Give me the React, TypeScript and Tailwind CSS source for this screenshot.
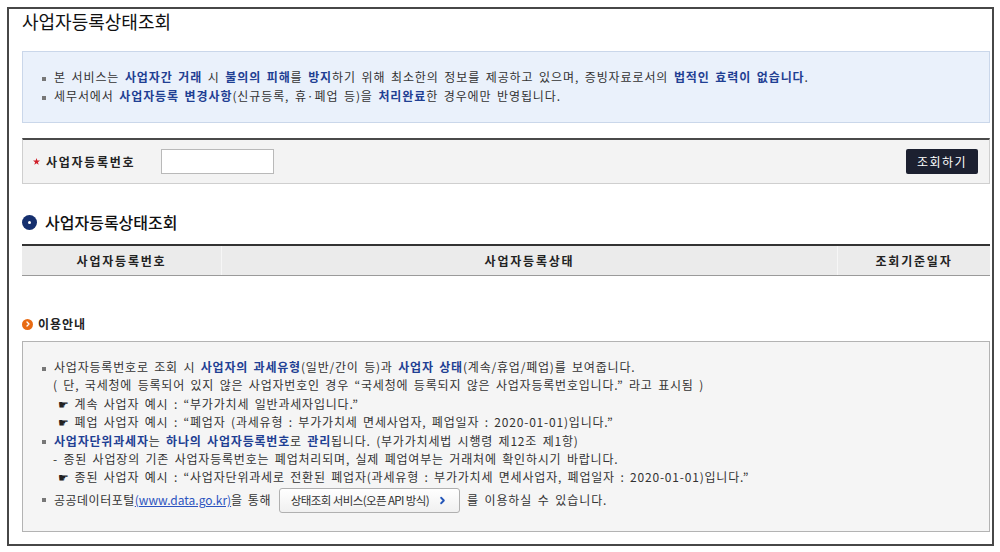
import { ChevronRight } from 'lucide-react';

const font = { fontFamily: '"Noto Sans CJK KR", "Noto Sans", sans-serif' };

function B({ children }: { children: React.ReactNode }) {
  return <b className="font-bold text-[#1f3f93]">{children}</b>;
}

function Dot() {
  return <span className="mr-[8px] inline-block h-[4px] w-[4px] bg-[#777] align-middle" />;
}

function Hand() {
  return (
    <span className="mr-[5px] inline-block text-[12px] leading-none text-[#222]" style={{ fontFamily: '"DejaVu Sans", sans-serif' }}>
      ☛
    </span>
  );
}

export default function App() {
  return (
    <div className="h-[552px] w-[1000px] bg-white pl-[7px] pt-[7px] text-[#333]" style={font}>
      <div className="h-[539px] w-[987px] border-2 border-[#474747] pl-[13px] pr-[2px]">
        <h1 className="h-[24px] text-[18px] leading-[24px] font-normal text-[#111]">사업자등록상태조회</h1>

        {/* info */}
        <div className="mt-[18px] border border-[#cad7ea] bg-[#eaf1fb] pb-[17px] pl-[19px] pt-[15px] text-[12px] leading-[19px] tracking-[0.9px] [word-spacing:2px]">
          <p>
            <Dot />본 서비스는 <B>사업자간 거래</B> 시 <B>불의의 피해</B>를 <B>방지</B>하기 위해 최소한의 정보를 제공하고 있으며, 증빙자료로서의 <B>법적인 효력이 없습니다</B>.
          </p>
          <p>
            <Dot />세무서에서 <B>사업자등록 변경사항</B>(신규등록, 휴·폐업 등)을 <B>처리완료</B>한 경우에만 반영됩니다.
          </p>
        </div>

        {/* search */}
        <div className="mt-[15px] flex h-[46px] items-center justify-between border border-t-2 border-[#cfcfcf] border-t-[#4a4a4a] bg-[#f3f3f3] pl-[10px] pr-[11px]">
          <div className="flex items-center">
            <svg className="mr-[6px]" width="7" height="7" viewBox="0 0 10 10">
              <path d="M5 0 L6.2 3.4 L10 3.6 L7 5.9 L8.1 9.6 L5 7.5 L1.9 9.6 L3 5.9 L0 3.6 L3.8 3.4 Z" fill="#d0202a" />
            </svg>
            <span className="w-[115px] text-[12px] font-bold tracking-[1.7px] text-[#222]">사업자등록번호</span>
            <input className="h-[25px] w-[113px] border border-[#b9b9b9] bg-white" />
          </div>
          <button className="h-[25px] w-[72px] rounded-[2px] bg-[#1c2030] text-[12px] tracking-[1.5px] text-white">조회하기</button>
        </div>

        {/* section heading */}
        <div className="mt-[28px] flex h-[20px] items-center">
          <span className="mr-[8px] flex h-[15px] w-[15px] items-center justify-center rounded-full bg-[#152f6e]">
            <span className="h-[3px] w-[3px] rounded-full bg-white" />
          </span>
          <span className="text-[16px] font-medium text-[#111]">사업자등록상태조회</span>
        </div>

        <div className="mt-[12px] grid h-[32px] grid-cols-[200px_1fr_152px] border-t-2 border-b border-t-[#333] border-b-[#9a9a9a] bg-[#ebebeb] text-[12px] font-bold tracking-[1.8px] text-[#222]">
          <div className="flex items-center justify-center border-r border-[#f6f6f6]">사업자등록번호</div>
          <div className="flex items-center justify-center border-r border-[#f6f6f6]">사업자등록상태</div>
          <div className="flex items-center justify-center">조회기준일자</div>
        </div>

        {/* guide */}
        <div className="mt-[40px] flex h-[16px] items-center">
          <span className="mr-[5px] flex h-[11px] w-[11px] items-center justify-center rounded-full bg-[#e86a12]">
            <ChevronRight className="h-[8px] w-[8px] text-white" strokeWidth={4} />
          </span>
          <span className="text-[12px] font-bold tracking-[1px] text-[#222]">이용안내</span>
        </div>

        <div className="mt-[9px] border border-[#b3b3b3] bg-[#f5f5f5] pb-[18px] pl-[19px] pt-[16px] text-[12px] leading-[18.4px] tracking-[0.8px] [word-spacing:2px]">
          <p>
            <Dot />사업자등록번호로 조회 시 <B>사업자의 과세유형</B>(일반/간이 등)과 <B>사업자 상태</B>(계속/휴업/폐업)를 보여줍니다.
          </p>
          <p className="pl-[11px]">( 단, 국세청에 등록되어 있지 않은 사업자번호인 경우 “국세청에 등록되지 않은 사업자등록번호입니다.” 라고 표시됨 )</p>
          <p className="pl-[16px]">
            <Hand />계속 사업자 예시 : “부가가치세 일반과세자입니다.”
          </p>
          <p className="pl-[16px]">
            <Hand />폐업 사업자 예시 : “폐업자 (과세유형 : 부가가치세 면세사업자, 폐업일자 : 2020-01-01)입니다.”
          </p>
          <p>
            <Dot /><B>사업자단위과세자</B>는 <B>하나의 사업자등록번호</B>로 <B>관리</B>됩니다. (부가가치세법 시행령 제12조 제1항)
          </p>
          <p className="pl-[11px]">- 종된 사업장의 기존 사업자등록번호는 폐업처리되며, 실제 폐업여부는 거래처에 확인하시기 바랍니다.</p>
          <p className="pl-[16px]">
            <Hand />종된 사업자 예시 : “사업자단위과세로 전환된 폐업자(과세유형 : 부가가치세 면세사업자, 폐업일자 : 2020-01-01)입니다.”
          </p>
          <div className="mt-[1px] flex items-center tracking-[0.5px]">
            <Dot />공공데이터포털
            <a className="tracking-[0px] text-[#2d54c0] underline" href="#">(www.data.go.kr)</a>을 통해
            <button className="ml-[8px] mr-[7px] flex h-[25px] w-[181px] items-center justify-center gap-[8px] rounded-[3px] border border-[#b0b0b0] bg-gradient-to-b from-white to-[#f0f0f0] text-[11.5px] tracking-[-0.6px] text-[#333] [word-spacing:0px]">
              상태조회 서비스(오픈 API 방식)
              <ChevronRight className="h-[11px] w-[11px] text-[#2456b8]" strokeWidth={4} />
            </button>
            <span className="tracking-[0.9px]">를 이용하실 수 있습니다.</span>
          </div>
        </div>
      </div>
    </div>
  );
}
